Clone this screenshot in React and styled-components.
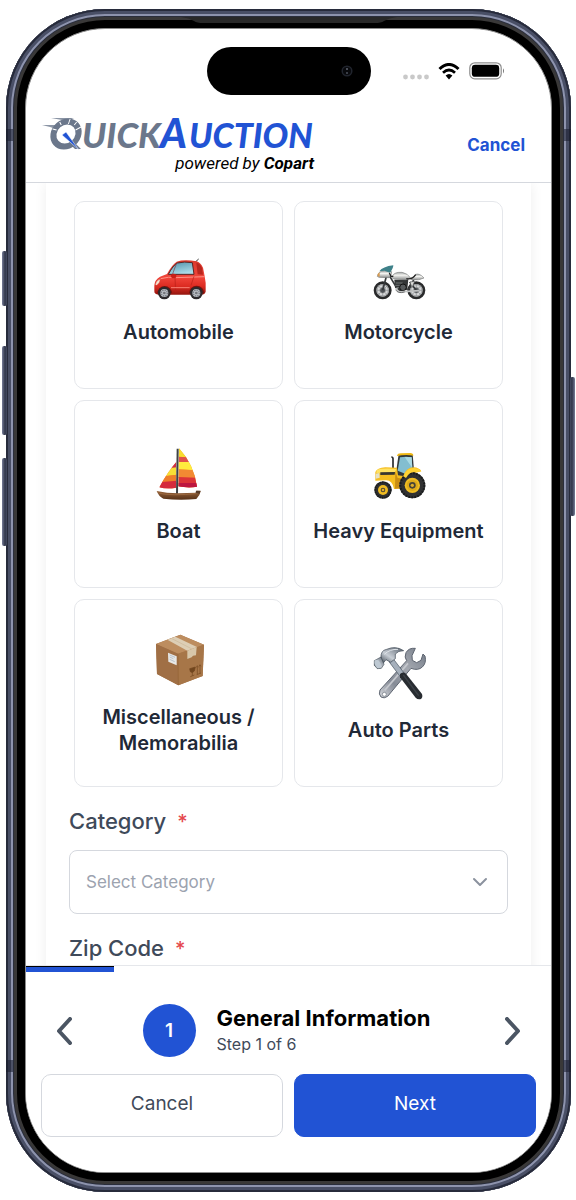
import React, { useState } from "react"
import styled, { createGlobalStyle } from "styled-components"

const colors = {
  blue: "#2153d4",
  ink: "#1f2937",
  label: "#3f4a5a",
  muted: "#9ca3af",
  line: "#d5d8de",
  lineSoft: "#e5e7eb",
  steel: "#6b778b",
  red: "#e5484d",
}

const CarIcon = () => (
  <ItemIcon viewBox="25 0 180 180" aria-hidden="true">
    <defs>
      <linearGradient id="carBody" x1="0" y1="0" x2="0" y2="1">
        <stop offset="0" stopColor="#d9392c" />
        <stop offset="0.5" stopColor="#f0443a" />
        <stop offset="0.75" stopColor="#dd2c22" />
        <stop offset="1" stopColor="#94160f" />
      </linearGradient>
      <linearGradient id="glass" x1="0" y1="0" x2="0.4" y2="1">
        <stop offset="0" stopColor="#4f8fa8" />
        <stop offset="1" stopColor="#a9dbe8" />
      </linearGradient>
    </defs>
    <path d="M164 51 L174 42" stroke="#333" strokeWidth="3" />
    <path
      d="M41 122 Q42 104 58 95 L79 87 Q94 59 108 50 Q130 42 168 49 Q178 51 187 68 L192 94 Q197 114 195 140 Q192 150 180 149 L54 149 Q40 148 41 138 Z"
      fill="url(#carBody)"
    />
    <path d="M83 88 Q97 61 110 54 Q131 49 155 53 L160 88 Z" fill="url(#glass)" stroke="#5b2523" strokeWidth="3" />
    <path d="M108 54 L95 89" stroke="#74404b" strokeWidth="2" />
    <path d="M167 54 Q177 54 184 69 L187 89 L171 88 Z" fill="#b8261e" />
    <path d="M44 119 Q46 106 59 102 Q58 115 47 121 Z" fill="#fbe7d6" stroke="#b63a2d" strokeWidth="1" />
    <path d="M60 101 Q85 94 104 98 L192 95" fill="none" stroke="#ff9184" strokeWidth="3" />
    <path d="M103 97 L105 142 M160 94 L151 121" stroke="#b81e17" strokeWidth="2" />
    <path d="M91 128 L147 128" stroke="#fb8175" strokeWidth="3" />
    <path d="M50 145 A22 22 0 0 1 94 145 M145 145 A22 22 0 0 1 191 145" fill="#77120d" />
    <ellipse cx="99" cy="93" rx="8" ry="7" fill="#c91f18" />
    {[71, 167].map(x => (
      <g key={x}>
        <circle cx={x} cy="144" r="19" fill="#2c2a2d" />
        <circle cx={x} cy="144" r="12" fill="#b9bdc3" />
        <circle cx={x} cy="144" r="9" fill="none" stroke="#777c85" strokeWidth="4" strokeDasharray="4 3" />
        <circle cx={x} cy="144" r="4" fill="#74777d" />
      </g>
    ))}
  </ItemIcon>
)

const MotorcycleIcon = () => (
  <ItemIcon viewBox="25 0 180 180" aria-hidden="true">
    <defs>
      <linearGradient id="chrome" x1="0" y1="0" x2="0" y2="1">
        <stop offset="0" stopColor="#a0a4a4" />
        <stop offset="0.4" stopColor="#f4f4f1" />
        <stop offset="1" stopColor="#8b8d8d" />
      </linearGradient>
    </defs>
    {[66, 167].map(x => (
      <g key={x}>
        <circle cx={x} cy="136" r="23" fill="#d6d7d8" stroke="#292a2b" strokeWidth="8" />
        <circle cx={x} cy="136" r="17" fill="none" stroke="#7e8386" strokeWidth="2" />
        <path
          d={`M${x - 19} 136 H${x + 19} M${x} 117 V155 M${x - 14} 122 L${x + 14} 150 M${x - 14} 150 L${x + 14} 122`}
          stroke="#85898b"
          strokeWidth="2"
        />
        <circle cx={x} cy="136" r="9" fill="#505458" stroke="#b8baba" strokeWidth="2" />
      </g>
    ))}
    <path d="M78 91 L66 136 M86 92 L111 133 L145 132 L159 105 M147 111 L167 136" fill="none" stroke="#36393b" strokeWidth="5" />
    <path d="M101 105 L143 103 L140 132 L120 142 L103 128 Z" fill="#333637" />
    <path d="M105 114 H126 M104 121 H127 M109 128 H129" stroke="#8e9496" strokeWidth="2" />
    <circle cx="127" cy="127" r="10" fill="#565a5c" stroke="#111" strokeWidth="3" />
    <path d="M108 128 Q108 143 128 140 L176 137" fill="none" stroke="#bfc1c1" strokeWidth="5" />
    <path d="M105 134 Q111 147 132 141" fill="none" stroke="#3b3d3e" strokeWidth="2" />
    <path d="M148 111 L162 109 L154 128 Z" fill="#dbdcda" stroke="#545657" strokeWidth="2" />
    <path d="M50 94 Q53 78 72 77 L93 80 Q93 91 86 98 L55 97 Z" fill="url(#chrome)" stroke="#787b7b" strokeWidth="2" />
    <path d="M56 79 Q66 65 98 61 Q98 70 88 83 L72 77 Z" fill="#3e8189" />
    <path d="M51 87 L57 82 L57 95 L51 94 Z" fill="#d99b4e" />
    <path d="M93 98 Q98 80 124 82 Q142 86 150 99 L136 104 L102 103 Z" fill="url(#chrome)" stroke="#858786" strokeWidth="2" />
    <path d="M150 99 Q160 101 165 88 Q177 84 190 99 Q176 107 151 104 Z" fill="url(#chrome)" stroke="#858786" strokeWidth="2" />
    <path d="M137 101 Q154 105 165 89" fill="none" stroke="#222" strokeWidth="4" />
    <path d="M86 84 L91 94 L98 94" fill="none" stroke="#222" strokeWidth="4" />
  </ItemIcon>
)

const BoatIcon = () => (
  <ItemIcon viewBox="25 12 180 180" aria-hidden="true">
    <defs>
      <clipPath id="sailRight">
        <path d="M115 25 Q160 74 169 140 Q144 145 113 139 Z" />
      </clipPath>
      <clipPath id="sailLeft">
        <path d="M107 66 Q80 97 56 142 Q80 149 106 143 Z" />
      </clipPath>
      <linearGradient id="hull" x1="0" y1="0" x2="0" y2="1">
        <stop offset="0" stopColor="#9a663d" />
        <stop offset="1" stopColor="#553016" />
      </linearGradient>
    </defs>
    <g clipPath="url(#sailRight)">
      <path d="M110 20 H180 V150 H110 Z" fill="#f4a01d" />
      <path d="M110 20 H180 V52 H110 Z" fill="#f8dd2f" />
      <path d="M110 50 L180 54 V68 H110 Z" fill="#e0524a" />
      <path d="M110 66 H180 V92 L110 88 Z" fill="#ffec3d" />
      <path d="M110 88 L180 91 V114 H110 Z" fill="#f28a33" />
      <path d="M110 111 L180 114 V150 H110 Z" fill="#dc3438" />
      <path d="M110 129 H180 V150 H110 Z" fill="#bd1740" />
    </g>
    <g clipPath="url(#sailLeft)">
      <path d="M50 60 H110 V150 H50 Z" fill="#f07a2d" />
      <path d="M50 60 H110 V86 H50 Z" fill="#cf2f47" />
      <path d="M50 88 L110 82 V104 L50 112 Z" fill="#f8df35" />
      <path d="M50 111 L110 104 V121 L50 128 Z" fill="#ef7e2a" />
      <path d="M50 127 L110 122 V150 H50 Z" fill="#d52b3c" />
    </g>
    <path d="M108 26 H114 L112 161 H106 Z" fill="#3e4245" />
    <path d="M48 153 Q78 160 113 160 L165 158 L168 152 L180 153 Q178 167 167 177 Q117 182 68 176 Q54 169 48 153 Z" fill="url(#hull)" />
    <path d="M53 159 Q91 169 173 160" fill="none" stroke="#a87247" strokeWidth="2" />
    <path d="M166 152 L180 152 L177 161 L165 160 Z" fill="#563b28" />
  </ItemIcon>
)

const TractorIcon = () => (
  <ItemIcon viewBox="27 12 180 180" aria-hidden="true">
    <path d="M99 90 L99 56 Q99 51 94 51" fill="none" stroke="#292a2d" strokeWidth="5" />
    <path d="M109 91 L116 42 H158 L162 92 L144 115 H107 Z" fill="#33393b" />
    <path d="M113 92 L120 52 Q139 48 155 52 L157 86 L139 103 Z" fill="#83bed0" />
    <path d="M134 51 L155 52 L157 84 Z" fill="#aadae4" />
    <path d="M111 46 Q113 39 125 40 L151 39 Q160 39 160 47 Q137 43 111 48 Z" fill="#efb915" />
    <path d="M46 96 Q51 84 76 82 L111 83 L114 106 L130 108 Q138 82 161 82 Q178 83 184 94 L165 99 L138 145 L102 147 Q97 119 76 121 L46 122 Z" fill="#f5bd20" />
    <path d="M50 90 Q68 83 109 87 L105 97 L49 99 Z" fill="#ffe263" />
    <path d="M47 101 L58 99 L59 113 L47 116 Z" fill="#e5e1c7" />
    <path d="M61 97 L105 96 L104 104 L61 105 Z" fill="#383630" />
    <path d="M106 94 L113 114 L133 116 L125 145 L105 146 Z" fill="#ca8e13" />
    <circle cx="157" cy="136" r="39" fill="#303132" />
    <circle cx="157" cy="136" r="36" fill="none" stroke="#191b1c" strokeWidth="6" strokeDasharray="5 4" />
    <circle cx="157" cy="136" r="23" fill="#f0bd22" />
    <circle cx="157" cy="136" r="17" fill="#ddaa1b" />
    <circle cx="157" cy="136" r="10" fill="#484437" />
    <circle cx="157" cy="136" r="5" fill="#dfaf2b" />
    <circle cx="69" cy="150" r="26" fill="#2f3031" />
    <circle cx="69" cy="150" r="23" fill="none" stroke="#191b1c" strokeWidth="5" strokeDasharray="4 3" />
    <circle cx="69" cy="150" r="15" fill="#efbb22" />
    <circle cx="69" cy="150" r="7" fill="#4a4434" />
    <circle cx="69" cy="150" r="4" fill="#e2ad26" />
    <path d="M130 109 Q140 84 162 84 Q174 84 184 94 L171 96 Q151 91 138 114 Z" fill="#ffd333" />
  </ItemIcon>
)

const BoxIcon = () => (
  <ItemIcon viewBox="25 15 180 180" aria-hidden="true">
    <path d="M46 57 L119 29 L190 59 L186 153 L113 181 L49 147 Z" fill="#a5744a" />
    <path d="M46 57 L119 29 L190 59 L112 86 Z" fill="#bd8d5f" />
    <path d="M46 57 L112 86 L113 181 L49 147 Z" fill="#a06f45" />
    <path d="M112 86 L190 59 L186 153 L113 181 Z" fill="#a77648" />
    <path d="M80 44 L104 35 L169 66 L140 77 Z" fill="#ddceb5" />
    <path d="M140 77 L168 66 L166 91 L157 92 L153 97 L140 102 Z" fill="#d8c7aa" />
    <path d="M92 40 L154 72" fill="none" stroke="#cbb899" strokeWidth="2" />
    <path d="M82 83 L108 94 V121 L83 110 Z" fill="#e7e8e7" />
    <path d="M87 90 L103 97 M87 96 L98 101 M87 103 L102 110" stroke="#a3b1be" strokeWidth="2" />
    <path d="M147 131 L164 126 L161 138 L155 143 L149 140 Z M155 143 V152 M149 155 L161 150" fill="#71461e" stroke="#71461e" strokeWidth="2" />
    <path d="M170 125 V148 M178 122 V145 M168 149 L181 144 M167 127 L170 122 L173 127 M175 124 L178 119 L181 124" fill="none" stroke="#76491f" strokeWidth="2" />
    <path d="M112 87 L113 180" stroke="#936234" strokeWidth="2" />
  </ItemIcon>
)

const ToolsIcon = () => (
  <ItemIcon viewBox="25 24 180 180" aria-hidden="true">
    <defs>
      <linearGradient id="wrench" x1="1" y1="0" x2="0" y2="1">
        <stop offset="0" stopColor="#737b87" />
        <stop offset="0.4" stopColor="#a4a8b0" />
        <stop offset="0.7" stopColor="#858b96" />
        <stop offset="1" stopColor="#d6d8dd" />
      </linearGradient>
      <linearGradient id="hammer" x1="0" y1="1" x2="1" y2="0">
        <stop offset="0" stopColor="#454e58" />
        <stop offset="0.4" stopColor="#c8ced5" />
        <stop offset="1" stopColor="#59626e" />
      </linearGradient>
    </defs>
    <path
      d="M164 40 Q144 38 136 53 Q130 67 138 77 L58 165 Q53 178 61 186 Q70 192 81 184 L151 100 Q172 108 185 96 Q198 84 193 63 L187 57 L181 76 L168 83 L155 76 L154 62 Z"
      fill="url(#wrench)"
      stroke="#5d6470"
      strokeWidth="3"
    />
    <path d="M142 85 L72 166" stroke="#c5c8ce" strokeWidth="5" />
    <circle cx="71" cy="178" r="6" fill="#ffffff" stroke="#69717b" strokeWidth="2" />
    <path d="M85 80 L99 73 L134 119 L121 128 Z" fill="#a6b0bc" stroke="#46515d" strokeWidth="2" />
    <path d="M118 117 Q126 108 136 116 L184 177 Q187 187 181 192 Q171 195 165 188 L118 127 Z" fill="#282c31" />
    <path d="M128 120 L174 182" stroke="#3d4248" strokeWidth="4" />
    <path
      d="M61 70 Q59 46 78 43 Q105 31 129 47 Q112 47 104 57 L104 71 L90 82 L76 74 L68 84 Z"
      fill="url(#hammer)"
      stroke="#3b4651"
      strokeWidth="2"
    />
    <path d="M41 77 L61 66 L70 88 L62 100 L50 101 L41 91 Z" fill="url(#hammer)" stroke="#3e4a55" strokeWidth="2" />
    <ellipse cx="51" cy="87" rx="8" ry="13" fill="#bec9d3" transform="rotate(-25 51 87)" />
    <path d="M71 58 Q87 42 112 43" fill="none" stroke="#dfe4e9" strokeWidth="3" />
  </ItemIcon>
)

const items = [
  { name: "Automobile", icon: CarIcon },
  { name: "Motorcycle", icon: MotorcycleIcon },
  { name: "Boat", icon: BoatIcon },
  { name: "Heavy Equipment", icon: TractorIcon },
  { name: "Miscellaneous / Memorabilia", icon: BoxIcon },
  { name: "Auto Parts", icon: ToolsIcon },
]

const Logo = () => (
  <LogoSvg viewBox="0 0 272 36" role="img" aria-label="QuickAuction">
    <path d="M9 3 L32 3 L24 6 L20 5 Z M0 10 L14 10 L11 13 L8 12 Z" fill="#8b95a5" />
    <path d="M24 31 L33 28 L39 34 L33 34 L30 31 Z" fill={colors.steel} />
    <g transform="translate(24 19) skewX(-8)">
      <circle r="12.5" fill="none" stroke={colors.steel} strokeWidth="6" />
      <path d="M-14 -5 L-10 -4 M-8 -12 L-6 -9 M2 -15 L1 -10 M9 -12 L7 -9 M14 -7 L9 -4" stroke="#ffffff" strokeWidth="1" />
    </g>
    <path d="M24 17 L37 35 L20 20 Z" fill={colors.blue} stroke="#ffffff" strokeWidth="0.5" />
    <LogoText x="40" y="33" $color={colors.steel} $size={35}>UICK</LogoText>
    <LogoText x="118" y="33" $color={colors.blue} $size={41}>A</LogoText>
    <LogoText x="147" y="33" $color={colors.blue} $size={34}>UCTION</LogoText>
  </LogoSvg>
)

const StatusIcons = () => (
  <StatusGroup>
    <svg width="26" height="6" viewBox="0 0 26 6" aria-hidden="true">
      {[3, 10, 17, 24].map(x => (
        <circle key={x} cx={x - 0.5} cy="3" r="2.4" fill="#c9c9c9" />
      ))}
    </svg>
    <svg width="22" height="17" viewBox="0 0 22 17" aria-hidden="true">
      <path d="M1.5 6 Q11 -3 20.5 6" fill="none" stroke="#000" strokeWidth="3" />
      <path d="M5 9.7 Q11 4.3 17 9.7" fill="none" stroke="#000" strokeWidth="2.8" />
      <path d="M7.6 12.6 Q11 9.6 14.4 12.6 L11 16.4 Z" fill="#000" />
    </svg>
    <svg width="36" height="18" viewBox="0 0 36 18" aria-hidden="true">
      <rect x="0.8" y="0.8" width="31.4" height="16" rx="5" fill="none" stroke="#8d8d8d" strokeWidth="1.2" />
      <rect x="2.8" y="2.8" width="27.4" height="12" rx="3.4" fill="#000" />
      <path d="M34 6.2 Q36 8.8 34 11.4 Z" fill="#777" />
    </svg>
  </StatusGroup>
)

const Chevron = ({ d, width, height, stroke = 4, color = "#4b5563" }) => (
  <svg width={width} height={height} viewBox={`0 0 ${width} ${height}`} aria-hidden="true">
    <path d={d} fill="none" stroke={color} strokeWidth={stroke} strokeLinecap="round" strokeLinejoin="round" />
  </svg>
)

const App = () => {
  const [selected, setSelected] = useState(null)
  const step = 1
  const totalSteps = 6

  return (
    <Page>
      <GlobalStyle />
      <Phone>
        <SideButton $side="left" $top={242} $length={55} />
        <SideButton $side="left" $top={337} $length={89} />
        <SideButton $side="left" $top={449} $length={88} />
        <SideButton $side="right" $top={368} $length={139} />
        <Antenna $edge="top" />
        <Antenna $edge="bottom" />
        <Earpiece viewBox="0 0 216 6" aria-hidden="true">
          <path d="M0 0 H216 Q208 1 203 4 Q200 6 194 6 H22 Q16 6 13 4 Q8 1 0 0 Z" fill="#292929" />
        </Earpiece>
        <Screen>
          <StatusBar>
            <Island>
              <Camera viewBox="0 0 12 12" aria-hidden="true">
                <circle cx="6" cy="6" r="4.8" fill="#08090c" stroke="#20242d" strokeWidth="1.5" />
                <circle cx="6" cy="4" r="1" fill="#5f6470" />
                <circle cx="6" cy="8" r="1" fill="#4b505b" />
              </Camera>
            </Island>
            <StatusIcons />
          </StatusBar>

          <Header>
            <Brand>
              <Logo />
              <Tagline>
                powered by <b>Copart</b>
              </Tagline>
            </Brand>
            <CancelLink href="#cancel">Cancel</CancelLink>
          </Header>

          <Main>
            <Panel>
              <ItemGrid>
                {items.map(({ name, icon: Icon }) => (
                  <ItemCard
                    key={name}
                    type="button"
                    $active={selected === name}
                    onClick={() => setSelected(name)}
                  >
                    <Icon />
                    <span>{name}</span>
                  </ItemCard>
                ))}
              </ItemGrid>
              <Field>
                <Label htmlFor="category">
                  Category <Required>*</Required>
                </Label>
                <SelectWrapper>
                  <Select id="category" defaultValue="">
                    <option value="">Select Category</option>
                  </Select>
                  <SelectArrow>
                    <Chevron d="M2 2 L8 8 L14 2" width={16} height={10} stroke={2} color="#8b929e" />
                  </SelectArrow>
                </SelectWrapper>
              </Field>
              <Field>
                <Label htmlFor="zip">
                  Zip Code <Required>*</Required>
                </Label>
                <Input id="zip" type="text" />
              </Field>
            </Panel>
          </Main>

          <Footer>
            <Progress>
              <ProgressBar style={{ width: `${(step / totalSteps) * 100}%` }} />
            </Progress>
            <StepRow>
              <ArrowButton type="button" aria-label="Previous step">
                <Chevron d="M14 2 L3 14 L14 26" width={16} height={28} />
              </ArrowButton>
              <StepInfo>
                <StepNumber>{step}</StepNumber>
                <StepText>
                  <StepTitle>General Information</StepTitle>
                  <StepCount>
                    Step {step} of {totalSteps}
                  </StepCount>
                </StepText>
              </StepInfo>
              <ArrowButton type="button" aria-label="Next step">
                <Chevron d="M2 2 L13 14 L2 26" width={16} height={28} />
              </ArrowButton>
            </StepRow>
            <Actions>
              <Button type="button">Cancel</Button>
              <Button type="button" $primary>
                Next
              </Button>
            </Actions>
          </Footer>
        </Screen>
      </Phone>
    </Page>
  )
}
export default App

const GlobalStyle = createGlobalStyle`
  * {
    box-sizing: border-box;
  }
  body {
    margin: 0;
    background: #ffffff;
    font-family: Inter, "Liberation Sans", sans-serif;
  }
  button, input, select {
    font-family: inherit;
  }
`
const Page = styled.div`
  height: 100vh;
  padding: 9px 5px 8px 6px;
  overflow: hidden;
`
const Phone = styled.div`
  position: relative;
  height: 100%;
  padding: 19px;
  border-radius: 99px;
  background: #000000;
  box-shadow:
    inset 0 0 0 2px #272b3b,
    inset 0 0 0 5px #494f66,
    inset 0 0 0 7px #8d93ad,
    inset 0 0 0 8px #2a2e3c,
    inset 0 0 0 11px #393838;
`
const SideButton = styled.span`
  position: absolute;
  top: ${props => props.$top}px;
  ${props => props.$side}: -4px;
  width: 5px;
  height: ${props => props.$length}px;
  border-radius: 2px;
  background: linear-gradient(
    ${props => (props.$side === "left" ? "to right" : "to left")},
    #777d98 0,
    #30364a 60%,
    #454b62
  );
`
const Antenna = styled.span`
  position: absolute;
  ${props => props.$edge}: 120px;
  left: 0;
  right: 0;
  height: 12px;
  border: solid rgba(24, 27, 43, 0.55);
  border-width: 0 7px;
`
const Earpiece = styled.svg`
  position: absolute;
  top: 8px;
  left: 50%;
  width: 216px;
  height: 6px;
  transform: translateX(-50%);
`
const Screen = styled.div`
  display: flex;
  flex-direction: column;
  height: 100%;
  overflow: hidden;
  border: 1px solid #8c8c8c;
  border-radius: 80px;
  background: #ffffff;
`
const StatusBar = styled.div`
  display: grid;
  flex-shrink: 0;
  grid-template-columns: 1fr auto 1fr;
  padding-top: 18px;
  align-items: center;
`
const Island = styled.div`
  display: flex;
  grid-column: 2;
  align-items: center;
  justify-content: flex-end;
  width: 164px;
  height: 48px;
  padding-right: 18px;
  border-radius: 24px;
  background: #000000;
`
const Camera = styled.svg`
  width: 12px;
  height: 12px;
`
const StatusGroup = styled.div`
  display: flex;
  align-items: flex-end;
  justify-content: flex-end;
  gap: 9px;
  padding-right: 46px;
`
const Header = styled.header`
  display: flex;
  flex-shrink: 0;
  align-items: center;
  justify-content: space-between;
  padding: 20px 26px 7px 16px;
  border-bottom: 1px solid ${colors.line};
`
const Brand = styled.div`
  display: flex;
  flex-direction: column;
`
const LogoSvg = styled.svg`
  width: 272px;
  height: 36px;
  overflow: visible;
`
const LogoText = styled.text`
  fill: ${props => props.$color};
  font-family: Lato, "Liberation Sans", sans-serif;
  font-size: ${props => props.$size}px;
  font-style: italic;
  font-weight: 900;
`
const Tagline = styled.p`
  align-self: flex-end;
  margin: 0;
  font-family: Roboto, sans-serif;
  font-size: 17px;
  font-style: italic;
  line-height: 24px;
`
const CancelLink = styled.a`
  color: ${colors.blue};
  font-size: 17px;
  font-weight: 700;
  text-decoration: none;
`
const Main = styled.main`
  flex: 1;
  min-height: 0;
  padding: 0 20px;
  overflow: auto;
  scrollbar-width: none;
`
const Panel = styled.div`
  padding: 18px 23px;
  box-shadow: 0 0 12px rgba(0, 0, 0, 0.07);
`
const ItemGrid = styled.div`
  display: grid;
  grid-template-columns: 1fr 1fr;
  gap: 11px;
  padding: 0 5px;
`
const ItemCard = styled.button`
  display: flex;
  flex-direction: column;
  align-items: center;
  justify-content: center;
  gap: 14px;
  min-height: 188px;
  padding: 0 8px;
  border: 1px solid ${props => (props.$active ? colors.blue : colors.lineSoft)};
  border-radius: 10px;
  background: #ffffff;
  color: ${colors.ink};
  font-size: 20px;
  font-weight: 600;
  line-height: 26px;
`
const ItemIcon = styled.svg`
  width: 60px;
  height: 60px;
`
const Field = styled.div`
  display: flex;
  flex-direction: column;
  gap: 14px;
  padding-top: 20px;
`
const Label = styled.label`
  color: ${colors.label};
  font-size: 22px;
  font-weight: 500;
  line-height: 28px;
`
const Required = styled.span`
  margin-left: 5px;
  color: ${colors.red};
  font-size: 20px;
`
const SelectWrapper = styled.div`
  position: relative;
`
const Select = styled.select`
  width: 100%;
  height: 64px;
  padding: 0 48px 0 16px;
  border: 1px solid ${colors.line};
  border-radius: 8px;
  appearance: none;
  background: #ffffff;
  color: ${colors.muted};
  font-size: 17px;
`
const SelectArrow = styled.span`
  position: absolute;
  top: 0;
  right: 20px;
  bottom: 0;
  display: flex;
  align-items: center;
  pointer-events: none;
`
const Input = styled.input`
  width: 100%;
  height: 64px;
  padding: 0 16px;
  border: 1px solid ${colors.line};
  border-radius: 8px;
  font-size: 17px;
`
const Footer = styled.footer`
  flex-shrink: 0;
  padding-bottom: 35px;
  border-top: 1px solid ${colors.lineSoft};
  background: #ffffff;
`
const Progress = styled.div`
  height: 6px;
`
const ProgressBar = styled.div`
  height: 100%;
  border-top: 1px solid #000000;
  background: ${colors.blue};
`
const StepRow = styled.div`
  display: flex;
  align-items: center;
  justify-content: space-between;
  padding: 32px 30px 17px;
`
const ArrowButton = styled.button`
  display: flex;
  padding: 0;
  border: 0;
  background: none;
`
const StepInfo = styled.div`
  display: flex;
  align-items: center;
  gap: 21px;
`
const StepText = styled.div`
  min-width: 218px;
`
const StepNumber = styled.span`
  display: flex;
  align-items: center;
  justify-content: center;
  width: 53px;
  height: 53px;
  border-radius: 50%;
  background: ${colors.blue};
  color: #ffffff;
  font-size: 19px;
  font-weight: 600;
`
const StepTitle = styled.h2`
  margin: 0;
  color: #000000;
  font-size: 22px;
  font-weight: 700;
  line-height: 28px;
`
const StepCount = styled.p`
  margin: 0;
  color: ${colors.label};
  font-size: 16px;
  line-height: 25px;
`
const Actions = styled.div`
  display: grid;
  grid-template-columns: 1fr 1fr;
  gap: 11px;
  padding: 0 15px;
`
const Button = styled.button`
  height: 63px;
  padding: 0 16px 4px;
  border: 1px solid ${props => (props.$primary ? colors.blue : colors.line)};
  border-radius: 10px;
  background: ${props => (props.$primary ? colors.blue : "#ffffff")};
  color: ${props => (props.$primary ? "#ffffff" : colors.label)};
  font-size: 19px;
`
